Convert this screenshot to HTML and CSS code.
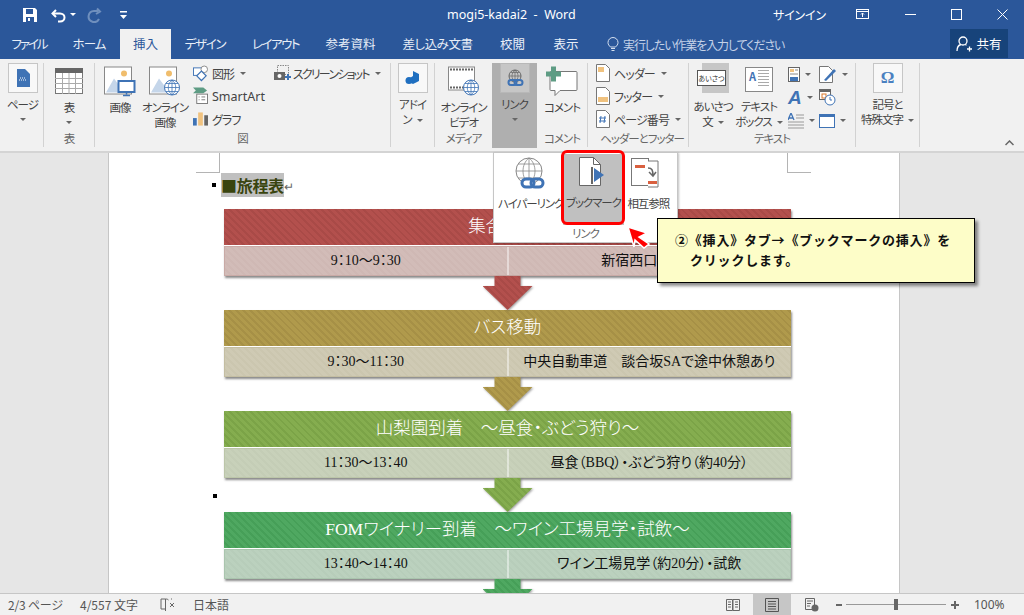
FILE: index.html
```html
<!DOCTYPE html>
<html lang="ja">
<head>
    <title>mogi5-kadai2 - Word</title>
    <meta charset="utf-8">
    <link rel="stylesheet" href="styles.css">
</head>
<body>
    <!-- Title bar -->
    <header class="titlebar">
        <div class="qat">
            <svg class="qat-save" width="16" height="16" viewBox="0 0 16 16"><path d="M1 1h12l2 2v12H1z" fill="#fff"/><rect x="4" y="2" width="7" height="5" fill="#2b579a"/><rect x="4" y="10" width="8" height="5" fill="#2b579a"/><rect x="6" y="11" width="2" height="3" fill="#fff"/></svg>
            <svg class="qat-undo" width="16" height="16" viewBox="0 0 16 16"><path d="M5 3 1.500 6.500 5 10" fill="none" stroke="#fff" stroke-width="2"/><path d="M2 6.500h7c6 0 6 8 0 8H7" fill="none" stroke="#fff" stroke-width="2"/></svg>
            <span class="qat-caret"></span>
            <svg class="qat-redo" width="16" height="16" viewBox="0 0 16 16"><path d="M11 1.500 14 4.500 10 7" fill="none" stroke="#6f8fbd" stroke-width="2"/><path d="M12 4H8a5.500 5.500 0 1 0 5 8" fill="none" stroke="#6f8fbd" stroke-width="2"/></svg>
            <svg class="qat-more" width="10" height="10" viewBox="0 0 10 10"><rect x="1" y="1" width="7" height="1.500" fill="#fff"/><path d="M1 5h7L4.500 9z" fill="#fff"/></svg>
        </div>
        <div class="doc-title">mogi5-kadai2&nbsp; - &nbsp;Word</div>
        <div class="signin">サインイン</div>
        <div class="win-btns">
            <svg width="14" height="11" viewBox="0 0 14 11"><rect x=".5" y=".5" width="12" height="9" fill="none" stroke="#fff"/><path d="M1 2.500h12M6.500 8V4M5 5.500l1.500-1.500L8 5.500" fill="none" stroke="#fff"/></svg>
            <svg width="11" height="11" viewBox="0 0 11 11"><rect x="0" y="5" width="11" height="1" fill="#fff"/></svg>
            <svg width="11" height="11" viewBox="0 0 11 11"><rect x=".5" y=".5" width="10" height="10" fill="none" stroke="#fff"/></svg>
            <svg width="11" height="11" viewBox="0 0 11 11"><path d="M.5.500l10 10M10.500.500l-10 10" stroke="#fff" fill="none"/></svg>
        </div>
    </header>

    <!-- Tabs -->
    <nav class="tabs">
        <a class="tab tab-file">ファイル</a>
        <a class="tab tab-home">ホーム</a>
        <a class="tab tab-active">挿入</a>
        <a class="tab tab-design">デザイン</a>
        <a class="tab tab-layout">レイアウト</a>
        <a class="tab tab-refs">参考資料</a>
        <a class="tab tab-mail">差し込み文書</a>
        <a class="tab tab-review">校閲</a>
        <a class="tab tab-view">表示</a>
        <div class="tell-me">
            <svg width="12" height="15" viewBox="0 0 12 15"><path d="M3.500 10C2 8.500 1 7.500 1 5.500a5 5 0 0 1 10 0c0 2-1 3-2.500 4.500z M4 11.500h4M4.500 13.500h3" fill="none" stroke="#d5e0f0"/></svg>
            <span>実行したい作業を入力してください</span>
        </div>
        <div class="share">
            <svg width="16" height="16" viewBox="0 0 16 16"><circle cx="7" cy="5" r="4" fill="none" stroke="#fff" stroke-width="1.300"/><path d="M1 15c0-4 2-6 4-6.500M9 8.500c.6.200 1 .4 1.500.8M11 13h5M13.500 10.500v5" fill="none" stroke="#fff" stroke-width="1.300"/></svg>
            <span>共有</span>
        </div>
    </nav>

    <!-- Ribbon -->
    <section class="ribbon">
        <div class="group g-page">
            <div class="group-body">
                <div class="big">
                    <div class="icon-box"><svg width="14" height="18" viewBox="0 0 14 18"><path d="M1 0h8l5 5v13H1z" fill="#3f73b5"/><path d="M3 11h8M4 9h6" stroke="#fff" stroke-dasharray="1 1"/></svg></div>
                    <span class="big-label">ページ</span><span class="caret"></span>
                </div>
            </div>
            <div class="group-label"></div>
        </div>
        <div class="group g-table">
            <div class="group-body">
                <div class="big">
                    <svg class="icon icon-table" width="28" height="26" viewBox="0 0 28 26"><rect x=".5" y=".5" width="27" height="25" fill="#fff" stroke="#777"/><rect width="28" height="5" fill="#666"/><path d="M0 10.500h28M0 15.500h28M0 20.500h28M7.500 5v21M14 5v21M20.500 5v21" stroke="#aaa"/></svg>
                    <span class="big-label">表</span><span class="caret"></span>
                </div>
            </div>
            <div class="group-label">表</div>
        </div>
        <div class="group g-illust">
            <div class="group-body">
                <div class="big big-picture">
                    <svg class="icon" width="32" height="30" viewBox="0 0 32 30"><rect x=".5" y=".5" width="27" height="27" fill="#fff" stroke="#888"/><circle cx="20" cy="7" r="3" fill="#f0bd6c"/><path d="M2 26 10 12l6 8 3-3 6 9z" fill="#c5d6ea"/><rect x="14.500" y="14.500" width="16" height="11" fill="#fff" stroke="#3f73b5" stroke-width="2"/><path d="M22.500 26v2M19 29h7" stroke="#3f73b5" stroke-width="1.500"/></svg>
                    <span class="big-label">画像</span>
                </div>
                <div class="big big-online">
                    <svg class="icon" width="32" height="30" viewBox="0 0 32 30"><rect x=".5" y=".5" width="27" height="27" fill="#fff" stroke="#888"/><circle cx="20" cy="7" r="3" fill="#f0bd6c"/><path d="M2 26 10 12l6 8 3-3 6 9z" fill="#c5d6ea"/><circle cx="23" cy="21" r="7.500" fill="#fff" stroke="#3f73b5"/><path d="M15.500 21h15M23 13.500v15M17 17h12M17 25h12M23 13.500c-5 4-5 11 0 15M23 13.500c5 4 5 11 0 15" fill="none" stroke="#3f73b5" stroke-width=".8"/></svg>
                    <span class="big-label">オンライン<br>画像</span>
                </div>
                <div class="small-col">
                    <div class="small"><svg width="15" height="17" viewBox="0 0 16 17"><rect x=".5" y="2.500" width="10" height="8" fill="#fff" stroke="#3f73b5"/><circle cx="12" cy="4" r="3.500" fill="#fff" stroke="#888"/><path d="M9 6l5 5-5 5-5-5z" fill="#fff" stroke="#3f73b5" stroke-width="1.300"/></svg><span>図形</span><span class="caret-inline"></span></div>
                    <div class="small"><svg width="15" height="18" viewBox="0 0 16 18"><path d="M0 0h11l4 3-4 3H0l3-3z" fill="#5e9c84"/><rect x="4" y="7" width="11.500" height="10" fill="#fff" stroke="#777"/><path d="M6 10h1M6 13h1M9 10h4M9 13h4" stroke="#777"/></svg><span class="latin">SmartArt</span></div>
                    <div class="small"><svg width="15" height="16" viewBox="0 0 16 16"><rect x="0" y="7" width="4" height="8" fill="#3f73b5"/><rect x="5.500" y="1" width="5" height="14" fill="#f0c27f"/><rect x="12" y="4" width="4" height="11" fill="#666"/></svg><span>グラフ</span></div>
                </div>
                <div class="small-col shot-col">
                    <div class="small"><svg width="18" height="16" viewBox="0 0 18 16"><rect x="3.500" y=".5" width="11" height="9" fill="none" stroke="#888" stroke-dasharray="1.500 1"/><rect x="0" y="7" width="11" height="8" fill="#666"/><circle cx="5.500" cy="11" r="2" fill="#fff"/><path d="M11 12h6M14 9v6" stroke="#3f73b5" stroke-width="2"/></svg><span class="shot-text">スクリーンショット</span><span class="caret-inline"></span></div>
                </div>
            </div>
            <div class="group-label">図</div>
        </div>
        <div class="group g-addin">
            <div class="group-body">
                <div class="big">
                    <div class="icon-box"><svg width="16" height="16" viewBox="0 0 16 16"><path d="M8 1l6 3v7l-6 3-3-1.500V8L8 6z" fill="#1f6fc0"/><circle cx="4" cy="10.500" r="3.500" fill="#1f6fc0"/></svg></div>
                    <span class="big-label">アドイ<br>ン<span class="caret-inline"></span></span>
                </div>
            </div>
            <div class="group-label"></div>
        </div>
        <div class="group g-media">
            <div class="group-body">
                <div class="big">
                    <svg class="icon" width="32" height="30" viewBox="0 0 32 30"><rect x=".5" y=".5" width="26" height="23" fill="#fff" stroke="#888"/><path d="M2 3h23M2 21h14" stroke="#666" stroke-width="2" stroke-dasharray="2 1"/><circle cx="23" cy="21" r="7.500" fill="#fff" stroke="#3f73b5"/><path d="M15.500 21h15M23 13.500v15M17 17h12M17 25h12M23 13.500c-5 4-5 11 0 15M23 13.500c5 4 5 11 0 15" fill="none" stroke="#3f73b5" stroke-width=".8"/></svg>
                    <span class="big-label">オンライン<br>ビデオ</span>
                </div>
            </div>
            <div class="group-label">メディア</div>
        </div>
        <div class="group g-link">
            <div class="group-body">
                <div class="big">
                    <div class="icon-box icon-box-dark"><svg width="18" height="18" viewBox="0 0 18 18"><circle cx="9" cy="7" r="6" fill="none" stroke="#666"/><path d="M3 7h12M9 1v12M5 3.500h8M5 10.500h8M9 1c-4 3-4 9 0 12M9 1c4 3 4 9 0 12" fill="none" stroke="#666" stroke-width=".7"/><rect x="2.500" y="11" width="8" height="5" rx="2.500" fill="none" stroke="#3f73b5" stroke-width="2"/><rect x="8.500" y="11" width="8" height="5" rx="2.500" fill="none" stroke="#3f73b5" stroke-width="2"/></svg></div>
                    <span class="big-label">リンク</span><span class="caret"></span>
                </div>
            </div>
        </div>
        <div class="group g-comment">
            <div class="group-body">
                <div class="big">
                    <svg class="icon" width="32" height="30" viewBox="0 0 32 30"><path d="M5 5h25a1 1 0 0 1 1 1v17a1 1 0 0 1-1 1H14l-5 5v-5H5a1 1 0 0 1-1-1V6a1 1 0 0 1 1-1z" fill="#fff" stroke="#777"/><path d="M5 0h5v5h5v5h-5v5H5v-5H0V5h5z" fill="#5e9c84"/></svg>
                    <span class="big-label">コメント</span>
                </div>
            </div>
            <div class="group-label">コメント</div>
        </div>
        <div class="group g-header">
            <div class="group-body">
                <div class="small-col">
                    <div class="small"><svg width="14" height="18" viewBox="0 0 14 18"><path d="M.5.500h9l4 4v13H.5z" fill="#fff" stroke="#777"/><rect x="2" y="3" width="6" height="5" fill="#f0c27f"/></svg><span>ヘッダー</span><span class="caret-inline"></span></div>
                    <div class="small"><svg width="14" height="18" viewBox="0 0 14 18"><path d="M.5.500h9l4 4v13H.5z" fill="#fff" stroke="#777"/><rect x="2" y="10" width="10" height="5" fill="#f0c27f"/></svg><span>フッター</span><span class="caret-inline"></span></div>
                    <div class="small"><svg width="14" height="18" viewBox="0 0 14 18"><path d="M.5.500h9l4 4v13H.5z" fill="#fff" stroke="#777"/><path d="M5 6 4 13M9 6 8 13M3 8h7M3 11h7" stroke="#3f73b5"/></svg><span>ページ番号</span><span class="caret-inline"></span></div>
                </div>
            </div>
            <div class="group-label">ヘッダーとフッター</div>
        </div>
        <div class="group g-text">
            <div class="group-body">
                <div class="big big-greet">
                    <div class="greet-icon"><span>あいさつ</span></div>
                    <span class="big-label">あいさつ<br>文<span class="caret-inline"></span></span>
                </div>
                <div class="big big-textbox">
                    <div class="textbox-icon"><b>A</b><i></i></div>
                    <span class="big-label">テキスト<br>ボックス<span class="caret-inline"></span></span>
                </div>
                <div class="tool-grid">
                    <div class="tool"><svg width="12" height="16" viewBox="0 0 12 16"><rect x=".5" y=".5" width="11" height="14" fill="#fff" stroke="#666"/><rect x="2" y="2" width="4" height="3" fill="#f0c27f"/><path d="M7 3h3M2 7h8" stroke="#888"/><rect x="2" y="10" width="8" height="4" fill="#3f73b5"/></svg><span class="caret-inline"></span></div>
                    <div class="tool"><svg width="18" height="18" viewBox="0 0 18 18"><path d="M.5.500h9l4 4v12H.5z" fill="#fff" stroke="#777"/><path d="M5 14 15 3l2 2L7 15z" fill="#3f73b5"/></svg><span class="caret-inline"></span></div>
                    <div class="tool"><b class="word-art">A</b><span class="caret-inline"></span></div>
                    <div class="tool"><svg width="17" height="17" viewBox="0 0 17 17"><rect x=".5" y=".5" width="11" height="10" fill="#fff" stroke="#666"/><rect y="0" width="12" height="3" fill="#666"/><rect x="3" y="5" width="4" height="4" fill="none" stroke="#d9772a"/><circle cx="11" cy="11" r="5" fill="#fff" stroke="#3f73b5"/><path d="M11 8v3h2" fill="none" stroke="#3f73b5"/></svg></div>
                    <div class="tool"><svg width="16" height="16" viewBox="0 0 16 16"><path d="M0 7 3 0l3 7M1 5h4" fill="none" stroke="#3f73b5" stroke-width="1.300"/><path d="M8 2h8M8 5h8M0 9h16M0 12h16M0 15h16" stroke="#999"/></svg><span class="caret-inline"></span></div>
                    <div class="tool"><svg width="16" height="14" viewBox="0 0 16 14"><rect x=".5" y=".5" width="15" height="13" fill="#fff" stroke="#3f73b5"/><rect width="16" height="3" fill="#3f73b5"/></svg><span class="caret-inline"></span></div>
                </div>
            </div>
            <div class="group-label">テキスト</div>
        </div>
        <div class="group g-symbol">
            <div class="group-body">
                <div class="big">
                    <div class="icon-box"><span class="omega">Ω</span></div>
                    <span class="big-label">記号と<br>特殊文字<span class="caret-inline"></span></span>
                </div>
            </div>
            <div class="group-label"></div>
        </div>
        <svg class="collapse" width="9" height="6" viewBox="0 0 9 6"><path d="M.5 5 4.500 1l4 4" fill="none" stroke="#666" stroke-width="1.500"/></svg>
    </section>

    <!-- Document -->
    <main class="doc">
        <div class="page">
            <span class="crop crop-left"></span>
            <span class="crop crop-right"></span>
            <h1 class="heading"><span class="bullet"></span><span class="heading-sel">■旅程表</span><span class="para-mark">↵</span></h1>

            <div class="flow">
                <div class="step step-red">
                    <div class="step-head">集合・出発</div>
                    <div class="step-row"><div>9：10～9：30</div><div>新宿西口バス停</div></div>
                </div>
                <div class="arrow-row arrow-red"><div class="arrow-shadow"><div class="arrow"></div></div></div>
                <div class="step step-gold">
                    <div class="step-head">バス移動</div>
                    <div class="step-row"><div>9：30～11：30</div><div>中央自動車道　談合坂SAで途中休憩あり</div></div>
                </div>
                <div class="arrow-row arrow-gold"><div class="arrow-shadow"><div class="arrow"></div></div></div>
                <div class="step step-green">
                    <div class="step-head">山梨園到着　～昼食・ぶどう狩り～</div>
                    <div class="step-row"><div>11：30～13：40</div><div>昼食（BBQ）・ぶどう狩り（約40分）</div></div>
                </div>
                <div class="arrow-row arrow-green"><span class="stray-bullet"></span><div class="arrow-shadow"><div class="arrow"></div></div></div>
                <div class="step step-teal">
                    <div class="step-head">FOMワイナリー到着　～ワイン工場見学・試飲～</div>
                    <div class="step-row"><div>13：40～14：40</div><div>ワイン工場見学（約20分）・試飲</div></div>
                </div>
                <div class="arrow-row arrow-teal"><div class="arrow-shadow"><div class="arrow"></div></div></div>
            </div>
        </div>
    </main>

    <!-- Status bar -->
    <footer class="status">
        <span class="st-pages">2/3 ページ</span>
        <span class="st-words">4/557 文字</span>
        <svg class="st-proof" width="16" height="14" viewBox="0 0 16 14"><path d="M5.500 1H1v10h4.500M5.500 1v12M5.500 1c1 0 2 0 3 1" fill="none" stroke="#666"/><path d="M10 5l4 4M14 5l-4 4M11 1h1" stroke="#666"/></svg>
        <span class="st-lang">日本語</span>
        <div class="st-right">
            <svg class="view-btn" width="14" height="14" viewBox="0 0 14 14"><path d="M.5 1.500h6v11h-6zM7 1.500h6.500v11H7zM2 4h3M2 6.500h3M2 9h3M9 4h3M9 6.500h3M9 9h3" fill="none" stroke="#666"/></svg>
            <div class="view-active"><svg width="14" height="14" viewBox="0 0 14 14"><path d="M.5.500h13v13H.5zM3 3.500h8M3 6h8M3 8.500h8M3 11h8" fill="none" stroke="#555"/></svg></div>
            <svg class="view-btn" width="14" height="14" viewBox="0 0 14 14"><path d="M.5.500h9v11H.5zM2 3h6M2 5.500h4M2 8h3" fill="none" stroke="#666"/><circle cx="10" cy="10" r="3.500" fill="#666"/></svg>
            <div class="zoom">
                <span class="zoom-minus"></span>
                <div class="zoom-track"><span class="zoom-thumb"></span></div>
                <span class="zoom-plus"></span>
            </div>
            <span class="zoom-value">100%</span>
        </div>
    </footer>

    <!-- Link dropdown -->
    <div class="popup">
        <div class="pop-buttons">
            <div class="pop-btn pop-hyper">
                <svg width="40" height="38" viewBox="0 0 40 38"><circle cx="18" cy="16" r="13" fill="none" stroke="#888"/><path d="M5 16h26M18 3v26M7 9h22M7 23h22M18 3c-8 6-8 20 0 26M18 3c8 6 8 20 0 26" fill="none" stroke="#888" stroke-width=".8"/><rect x="11" y="24" width="12" height="8" rx="4" fill="#fff" stroke="#3f73b5" stroke-width="3"/><rect x="20" y="24" width="12" height="8" rx="4" fill="none" stroke="#3f73b5" stroke-width="3"/></svg>
                <span>ハイパーリンク</span>
            </div>
            <div class="pop-btn pop-mark">
                <svg width="40" height="38" viewBox="0 0 40 38"><path d="M6.500 3.500h14l7 7v21h-21z" fill="#fff" stroke="#666"/><path d="M20.500 3.500v7h7" fill="none" stroke="#666"/><rect x="18" y="13" width="2" height="17" fill="#666"/><path d="M21 14l10 7-10 7z" fill="#3f73b5"/></svg>
                <span>ブックマーク</span>
            </div>
            <div class="pop-btn pop-cross">
                <svg width="40" height="38" viewBox="0 0 40 38"><rect x="3.500" y="3.500" width="17" height="27" fill="#fff" stroke="#777"/><rect x="7" y="10" width="10" height="3" fill="#d9603f"/><path d="M20 6h10v26H20" fill="#fff" stroke="#777"/><rect x="20" y="26" width="9" height="3" fill="#d9603f"/><path d="M20 13c4 0 5 2 5 8M21 17l4 4 3-4" fill="none" stroke="#666" stroke-width="1.500"/></svg>
                <span>相互参照</span>
            </div>
        </div>
        <div class="pop-label">リンク</div>
    </div>
    <div class="pop-highlight"></div>

    <!-- Callout -->
    <svg class="pointer" width="32" height="30" viewBox="0 0 32 30"><path d="M3 3 22 9 14 13 24 20 19 24 10 16 9 23z" fill="#f00" stroke="#fff" stroke-width="1.500"/></svg>
    <div class="callout">
        <p>②《挿入》タブ→《ブックマークの挿入》を</p>
        <p class="callout-indent">クリックします。</p>
    </div>
</body>
</html>
```

FILE: styles.css
```css
/* Word 2016 window, insert tab */
* {
    box-sizing: border-box;
}

html, body {
    margin: 0;
    height: 100%;
}

body {
    width: 1024px;
    height: 615px;
    overflow: hidden;
    position: relative;
    display: flex;
    flex-direction: column;
    font-family: "Noto Sans CJK JP", "Liberation Sans", sans-serif;
    font-feature-settings: "palt";
    font-size: 12px;
    color: #444;
    background: #e6e6e6;
}

/* Title bar */
.titlebar {
    height: 29px;
    flex: none;
    display: flex;
    align-items: center;
    background: #2b579a;
    color: #fff;
}

.qat {
    width: 130px;
    display: flex;
    align-items: center;
    padding-left: 22px;
}

.qat-undo {
    margin-left: 13px;
}

.qat-caret {
    width: 0;
    height: 0;
    margin-left: 3px;
    border: 3px solid transparent;
    border-top: 3px solid #fff;
    border-bottom: 0;
}

.qat-redo {
    margin-left: 10px;
}

.qat-more {
    margin-left: 17px;
}

.doc-title {
    margin-left: 317px;
    width: 326px;
    font-family: "Noto Sans", sans-serif;
    font-size: 12.500px;
}

.signin {
    width: 83px;
    font-size: 12px;
    letter-spacing: -.200px;
}

.win-btns {
    flex: 1;
    display: flex;
    align-items: center;
    gap: 35px;
}

/* Tabs */
.tabs {
    height: 30px;
    flex: none;
    display: flex;
    align-items: center;
    position: relative;
    background: #2b579a;
    color: #e8eef7;
    font-size: 12.500px;
}

.tab {
    height: 30px;
    line-height: 30px;
    text-align: center;
}

.tab-file { width: 58px; letter-spacing: -2px; }
.tab-home { width: 62px; letter-spacing: -1px; }
.tab-active {
    width: 51px;
    background: #f1f1f1;
    color: #2b579a;
}
.tab-design { width: 68px; letter-spacing: -1.300px; }
.tab-layout { width: 73px; letter-spacing: -1.500px; }
.tab-refs { width: 77px; }
.tab-mail { width: 97px; letter-spacing: -.500px; }
.tab-review { width: 53px; }
.tab-view { width: 54px; }

.tell-me {
    margin-left: 14px;
    display: flex;
    align-items: center;
    gap: 4px;
    color: #c4d2e8;
    font-size: 12px;
    letter-spacing: -1.100px;
}

.share {
    position: absolute;
    left: 950px;
    top: 0;
    width: 58px;
    height: 29px;
    display: flex;
    align-items: center;
    justify-content: center;
    gap: 4px;
    background: #17437a;
    color: #fff;
    font-size: 12.500px;
}

/* Ribbon */
.ribbon {
    height: 94px;
    flex: none;
    display: flex;
    position: relative;
    padding-top: 4px;
    background: #f1f1f1;
    border-bottom: 2px solid #d4d4d4;
}

.group {
    height: 84px;
    display: flex;
    flex-direction: column;
    border-right: 1px solid #d2d2d2;
}

.group-body {
    flex: 1;
    display: flex;
    min-height: 0;
}

.group-label {
    height: 18px;
    line-height: 18px;
    text-align: center;
    font-size: 11.500px;
    letter-spacing: -1px;
    white-space: nowrap;
    color: #666;
}

.g-page { width: 44px; padding-left: 2px; }
.g-table { width: 51px; }
.g-illust { width: 296px; }
.g-addin { width: 44px; }
.g-media { width: 57px; border-right: 0; }
.g-link {
    width: 45px;
    height: 85px;
    border-right: 0;
    background: #afafaf;
}
.g-comment { width: 51px; }
.g-header { width: 101px; padding-left: 8px; }
.g-text { width: 167px; }
.g-symbol { width: 64px; }

.big {
    flex: 1;
    display: flex;
    flex-direction: column;
    align-items: center;
    min-width: 0;
    text-align: center;
}

.big-label {
    line-height: 15px;
    font-size: 11.500px;
    letter-spacing: -1px;
    white-space: nowrap;
}

.icon {
    height: 31px;
    margin: 3px 0 3px;
    flex: none;
}

.icon-table {
    height: 26px;
    margin: 5px 0 6px;
}

.icon-box {
    width: 30px;
    height: 30px;
    margin-bottom: 4px;
    flex: none;
    display: flex;
    align-items: center;
    justify-content: center;
    background: #f8f8f8;
    border: 1px solid #c6c6c6;
}

.icon-box-dark {
    background: #c6c6c6;
    border-color: #b8b8b8;
}

.caret, .caret-inline {
    display: inline-block;
    width: 0;
    height: 0;
    border: 3px solid transparent;
    border-top: 3px solid #666;
    border-bottom: 0;
}

.caret {
    margin-top: 6px;
}

.caret-inline {
    margin-left: 5px;
    vertical-align: middle;
}

.big-picture {
    flex: none;
    width: 32px;
    margin-left: 9px;
}

.big-online {
    flex: none;
    width: 44px;
    margin: 0 6px 0 7px;
}

.small-col {
    display: flex;
    flex-direction: column;
    gap: 3px;
    padding-top: 0;
}

.small {
    height: 20px;
    display: flex;
    align-items: center;
    gap: 4px;
    white-space: nowrap;
    font-size: 12px;
    letter-spacing: -.900px;
}

.small svg {
    flex: none;
}

.small .caret-inline {
    margin-left: 2px;
}

.latin {
    font-family: "Noto Sans", sans-serif;
    font-size: 12.500px;
    letter-spacing: 0;
}

.shot-col {
    margin-left: 9px;
}

.shot-text {
    margin-left: -3px;
    letter-spacing: -1.800px;
}

.big-greet {
    flex: none;
    width: 48px;
}

.greet-icon {
    width: 32px;
    height: 30px;
    margin-bottom: 6px;
    display: flex;
    align-items: center;
    background: linear-gradient(#c6c6c6, #c6c6c6) no-repeat 5px 0 / 27px 100%;
}

.greet-icon span {
    width: 29px;
    height: 16px;
    line-height: 14px;
    background: #fff;
    border: 1px solid #555;
    font-size: 7px;
    color: #333;
}

.big-textbox {
    flex: none;
    width: 44px;
}

.textbox-icon {
    width: 28px;
    height: 25px;
    margin: 4px 0 7px;
    padding: 2px 3px;
    display: flex;
    gap: 2px;
    background: #fff;
    border: 1px solid #888;
}

.textbox-icon b {
    font-size: 11px;
    line-height: 13px;
    color: #3f73b5;
}

.textbox-icon i {
    flex: 1;
    height: 18px;
    background: repeating-linear-gradient(#aaa 0 1px, transparent 1px 3px);
}

.tool-grid {
    width: 64px;
    margin-left: 7px;
    display: grid;
    grid-template-columns: 31px 33px;
    grid-auto-rows: 23px;
    align-items: center;
}

.tool {
    display: flex;
    align-items: center;
}

.word-art {
    width: 14px;
    font-family: "Liberation Sans", sans-serif;
    font-size: 19px;
    line-height: 20px;
    font-style: italic;
    color: #3f73b5;
}

.omega {
    font-family: "Liberation Serif", serif;
    font-size: 17px;
    font-weight: bold;
    color: #4a80c0;
}

.collapse {
    position: absolute;
    left: 1005px;
    top: 81px;
}

/* Document */
.doc {
    flex: 1;
    min-height: 0;
    overflow: hidden;
    padding-left: 108px;
    background: #e6e6e6;
}

.page {
    width: 792px;
    height: 100%;
    position: relative;
    padding-top: 20px;
    background: #fff;
    border-left: 1px solid #c6c6c6;
    border-right: 1px solid #c6c6c6;
}

.crop {
    position: absolute;
    top: 0;
    width: 24px;
    height: 20px;
    border-bottom: 1px solid #b4b4b4;
}

.crop-left {
    left: 87px;
    border-right: 1px solid #b4b4b4;
}

.crop-right {
    left: 678px;
    border-left: 1px solid #b4b4b4;
}

.heading {
    height: 24px;
    margin: 0 0 0 103px;
    display: flex;
    align-items: center;
    font-size: 16px;
    font-weight: bold;
    color: #39440f;
}

.bullet {
    width: 4px;
    height: 4px;
    margin-right: 5px;
    background: #000;
}

.heading-sel {
    height: 24px;
    line-height: 24px;
    background: #c0c0c0;
    font-feature-settings: normal;
    letter-spacing: -.300px;
}

.para-mark {
    font-size: 12px;
    font-weight: normal;
    color: #666;
}

.flow {
    width: 567px;
    margin: 12px 0 0 115px;
    font-family: "Liberation Serif", "Noto Sans CJK JP", serif;
}

.step {
    height: 67px;
    display: flex;
    flex-direction: column;
    box-shadow: 1px 2px 2px rgba(60, 60, 60, .6);
}

.step-head {
    height: 36px;
    line-height: 35px;
    text-align: center;
    font-size: 17.500px;
    font-weight: 300;
    color: #fff;
}

.step-row {
    flex: 1;
    display: flex;
    margin-top: 1px;
    border: 1px solid rgba(255, 255, 255, .4);
    font-size: 14px;
    line-height: 27px;
    color: #111;
    text-align: center;
}

.step-row div {
    flex: 1;
    white-space: nowrap;
    overflow: hidden;
}

.step-row div + div {
    border-left: 2px solid rgba(255, 255, 255, .45);
}

.step-red .step-head, .arrow-red .arrow {
    background: repeating-linear-gradient(45deg, #b3504d 0 3px, #a94a47 3px 5px);
}
.step-red .step-row {
    background: repeating-linear-gradient(45deg, #d2bcb8 0 3px, #cfb8b4 3px 5px);
    border-color: #c9aaa6;
}

.step-gold .step-head, .arrow-gold .arrow {
    background: repeating-linear-gradient(45deg, #b09a4c 0 3px, #a69046 3px 5px);
}
.step-gold .step-row {
    background: repeating-linear-gradient(45deg, #cfcab4 0 3px, #cbc6af 3px 5px);
    border-color: #c4bea2;
}

.step-green .step-head, .arrow-green .arrow {
    background: repeating-linear-gradient(45deg, #85ad4f 0 3px, #7ba347 3px 5px);
}
.step-green .step-row {
    background: repeating-linear-gradient(45deg, #c8d1ba 0 3px, #c4cdb6 3px 5px);
    border-color: #bcc6a9;
}

.step-teal .step-head, .arrow-teal .arrow {
    background: repeating-linear-gradient(45deg, #4fa861 0 3px, #469f58 3px 5px);
}
.step-teal .step-row {
    background: repeating-linear-gradient(45deg, #bbd1be 0 3px, #b7cdba 3px 5px);
    border-color: #aac5ae;
}

.arrow-row {
    height: 34px;
    position: relative;
    display: flex;
    justify-content: center;
}

.arrow-shadow {
    width: 50px;
    height: 34px;
    filter: drop-shadow(1px 1px 1px rgba(60, 60, 60, .5));
}

.arrow {
    width: 50px;
    height: 34px;
    clip-path: polygon(12px 0, 38px 0, 38px 10px, 50px 10px, 25px 34px, 0 10px, 12px 10px);
}

.stray-bullet {
    position: absolute;
    left: -11px;
    top: 16px;
    width: 4px;
    height: 4px;
    background: #000;
}

/* Status bar */
.status {
    height: 22px;
    flex: none;
    display: flex;
    align-items: center;
    padding-left: 8px;
    background: #f1f1f1;
    border-top: 1px solid #c6c6c6;
    font-size: 12px;
    color: #555;
}

.st-pages { width: 72px; letter-spacing: -.200px; }
.st-words { width: 80px; }
.st-proof { margin-right: 17px; }
.st-lang { width: 560px; }

.st-right {
    flex: 1;
    height: 100%;
    display: flex;
    align-items: center;
}

.st-lang + .st-right .view-btn:first-child {
    margin-left: -27px;
}

.view-active {
    width: 38px;
    height: 100%;
    margin-left: 13px;
    display: flex;
    align-items: center;
    justify-content: center;
    background: #c6c6c6;
}

.view-active + .view-btn {
    margin-left: 14px;
}

.zoom {
    margin-left: 17px;
    display: flex;
    align-items: center;
    gap: 4px;
}

.zoom-minus {
    width: 6px;
    height: 2px;
    background: #666;
}

.zoom-track {
    width: 100px;
    height: 1px;
    position: relative;
    background: #999;
}

.zoom-thumb {
    position: absolute;
    left: 48px;
    top: -5px;
    width: 4px;
    height: 11px;
    background: #666;
}

.zoom-plus {
    width: 8px;
    height: 8px;
    margin-left: 1px;
    background: linear-gradient(#666, #666) center / 100% 2px no-repeat, linear-gradient(#666, #666) center / 2px 100% no-repeat;
}

.zoom-value {
    margin-left: 15px;
    font-family: "Noto Sans", sans-serif;
}

/* Link dropdown, over the document */
.popup {
    position: absolute;
    left: 493px;
    top: 152px;
    width: 185px;
    height: 91px;
    padding: 2px 4px 0;
    display: flex;
    flex-direction: column;
    background: #fff;
    border: 1px solid #c6c6c6;
    box-shadow: 1px 1px 2px rgba(0, 0, 0, .25);
}

.pop-buttons {
    flex: 1;
    display: flex;
}

.pop-btn {
    display: flex;
    flex-direction: column;
    align-items: center;
    font-size: 11.500px;
    white-space: nowrap;
    letter-spacing: -1.100px;
}

.pop-hyper { width: 66px; }
.pop-mark { width: 61px; position: relative; }
.pop-cross { width: 50px; }

.pop-btn span {
    line-height: 20px;
}

.pop-label {
    height: 20px;
    text-align: center;
    font-size: 11.500px;
    letter-spacing: -1px;
    color: #666;
}

/* bookmark highlight sits under the button, so it is painted with the button */
.pop-mark {
    background: #c0c0c0;
    height: 71px;
    margin-top: -1px;
}

.pop-highlight {
    position: absolute;
    left: 561px;
    top: 150px;
    width: 64px;
    height: 75px;
    border: 3px solid #f00;
    border-radius: 6px;
}

.pointer {
    position: absolute;
    left: 625px;
    top: 224px;
}

.callout {
    position: absolute;
    left: 657px;
    top: 218px;
    width: 318px;
    height: 65px;
    padding: 12px 0 0 17px;
    background: #fdfdc8;
    border: 1px solid #000;
    box-shadow: 3px 3px 3px rgba(0, 0, 0, .45);
    font-size: 13px;
    font-weight: bold;
    letter-spacing: .800px;
    color: #111;
}

.callout p {
    margin: 0 0 3px;
    line-height: 17px;
    font-feature-settings: normal;
}

.callout-indent {
    padding-left: 15px;
}
```
